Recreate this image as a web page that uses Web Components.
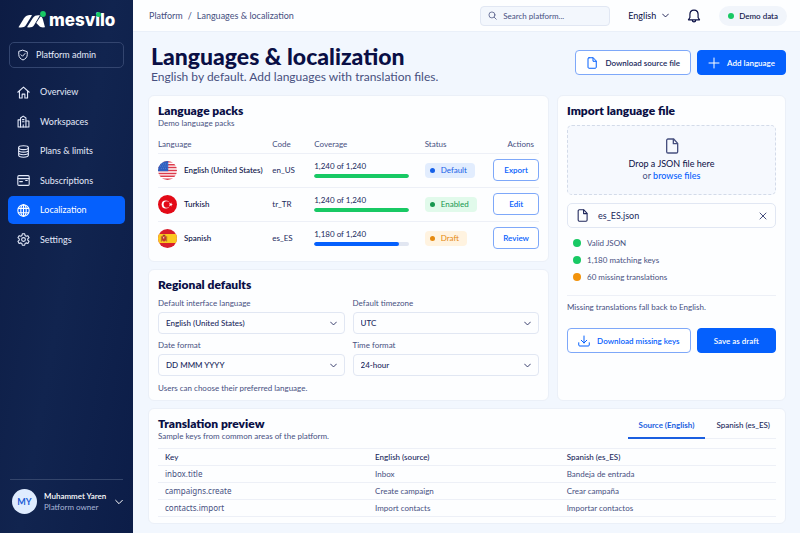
<!DOCTYPE html>
<html lang="en">
<head>
<meta charset="utf-8">
<meta name="viewport" content="width=device-width, initial-scale=1">
<title>Languages &amp; localization</title>
<style>
  :root {
    --ink: #0a0f45; --text: #20285c; --muted: #47507f; --blue: #0560fd;
    --line: #edf0f7; --edge: #e1e7f3; --green: #18c964; --orange: #f2930c;
  }
  body { margin: 0; font: 9px/12px Lato, "Noto Sans", sans-serif; color: var(--text); background: #f2f7fe; }
</style>
</head>
<body>
<admin-shell>
  <side-bar slot="side"></side-bar>
  <top-bar slot="top"></top-bar>
  <page-head></page-head>
  <card-grid>
    <ui-card heading="Language packs" note="Demo language packs"><language-table></language-table></ui-card>
    <ui-card heading="Regional defaults"><regional-form></regional-form></ui-card>
    <ui-card class="tall" heading="Import language file"><import-panel></import-panel></ui-card>
    <ui-card class="wide" heading="Translation preview" note="Sample keys from common areas of the platform.">
      <preview-tabs slot="tools"></preview-tabs>
      <preview-table></preview-table>
    </ui-card>
  </card-grid>
</admin-shell>

<script>
const define = (name, html, setup) => customElements.define(name, class extends HTMLElement {
  constructor() {
    super();
    this.attachShadow({ mode: 'open' });
  }
  connectedCallback() {
    const t = document.createElement('template');
    t.innerHTML = '<style>*{box-sizing:border-box}:host{display:block;box-sizing:border-box}</style>' +
      (typeof html === 'function' ? html(this) : html);
    this.shadowRoot.replaceChildren(t.content.cloneNode(true));
    if (setup) setup(this.shadowRoot, this);
  }
});

const ICONS = {
  shield: '<path d="M12 2.500 20.500 5.500V11c0 5.500-3.500 9-8.500 11-5-2-8.500-5.500-8.500-11V5.500z"/><path d="m8 11.500 3 3 5-5.500"/>',
  home: '<path d="M1.500 11.500 12 2l10.500 9.500"/><path d="M4.500 9.500V22H9.500v-7h5v7h5V9.500"/>',
  building: '<path d="M6.500 22V5.500L11.500 2l5 3.500V22"/><path d="M6.500 9H2v13h20V11h-5.500"/><path d="M11.500 22v-4M10 8.500h3M10 12.500h3"/>',
  stack: '<ellipse cx="12" cy="5" rx="9" ry="3.500"/><path d="M3 5v14c0 2 4 3.500 9 3.500s9-1.500 9-3.500V5M3 9.700c0 2 4 3.500 9 3.500s9-1.500 9-3.500M3 14.400c0 2 4 3.500 9 3.500s9-1.500 9-3.500"/>',
  cardpay: '<rect x="1.500" y="3" width="21" height="18" rx="2"/><path d="M1.500 8.500h21M5 14h5M16 12h3"/>',
  globe: '<circle cx="12" cy="12" r="10.500"/><ellipse cx="12" cy="12" rx="5" ry="10.500"/><path d="M2.500 8h19M2.500 16h19M12 1.500v21"/>',
  gear: '<circle cx="12" cy="12" r="3.500"/><path d="M9.800 1.500h4.400l.7 3.200 2 1.200 3.200-1 2.200 3.800-2.500 2.200v2.300l2.500 2.200-2.200 3.800-3.200-1-2 1.200-.7 3.200H9.800l-.7-3.200-2-1.200-3.200 1-2.200-3.800 2.500-2.200v-2.300L1.700 8.700l2.200-3.800 3.200 1 2-1.200z"/>',
  down: '<path d="m2 7 10 10L22 7"/>',
  search: '<circle cx="10.500" cy="10.500" r="8"/><path d="m16.500 16.500 5.500 5.500"/>',
  bell: '<path d="M12 2c-4.200 0-7 3.200-7 7v5.500L2.500 18.500h19L19 14.500V9c0-3.800-2.800-7-7-7zM9 19c.3 4 5.700 4 6 0"/>',
  file: '<path d="M6 1.500h8.500L20.500 8v12.500a2 2 0 0 1-2 2H6a2 2 0 0 1-2-2v-17a2 2 0 0 1 2-2z"/><path d="M14 2v6.500h6"/>',
  plus: '<path d="M12 2v20M2 12h20"/>',
  close: '<path d="m3 3 18 18M21 3 3 21"/>',
  download: '<path d="M12 2v14M6.500 10.500 12 16l5.500-5.500M1.500 15.500V20a2 2 0 0 0 2 2h17a2 2 0 0 0 2-2v-4.500"/>',
};
define('ui-icon', el => `
  <style>:host{display:inline-flex;flex:none;width:${el.getAttribute('size') || 12}px;height:${el.getAttribute('size') || 12}px}
  svg{width:100%;height:100%;fill:none;stroke:currentColor;stroke-width:${el.getAttribute('weight') || 2};stroke-linecap:round;stroke-linejoin:round}</style>
  <svg viewBox="0 0 24 24" aria-hidden="true">${ICONS[el.getAttribute('name')]}</svg>`);

const FLAGS = {
  us: '<path fill="#fff" d="M0 0h26v26H0z"/><path stroke="#dd3a4b" stroke-width="2" d="M0 1h26M0 5h26M0 9h26M0 13h26M0 17h26M0 21h26M0 25h26"/><path fill="#2f5fc0" d="M0 0h14v14H0z"/><path stroke="#7f9fe0" stroke-width="1" stroke-dasharray="1 2" d="M4 4h10M3 7h11M4 10h10"/>',
  tr: '<path fill="#e30a17" d="M0 0h26v26H0z"/><circle cx="10.500" cy="13" r="5.500" fill="#fff"/><circle cx="12" cy="13" r="4.300" fill="#e30a17"/><path fill="#fff" d="m20.500 13-2 .8-.1 2.100-1.300-1.700-2 .5 1.100-1.700-1.100-1.800 2 .6 1.300-1.700.1 2.200z"/>',
  es: '<path fill="#d81e2c" d="M0 0h26v26H0z"/><path fill="#fbc81f" d="M0 7h26v12H0z"/><path fill="#c0392f" d="M5.500 10h5.500v4.500a2.700 2.700 0 0 1-5.500 0z"/><path fill="#8c4b2c" d="M4 10h1v7H4zM11.500 10h1v7h-1zM6.500 8h3.500v1.500H6.500z"/><path fill="#f3d7c0" d="M7 11h1.500v2H7z"/>',
};
define('flag-disc', el => `
  <style>:host{display:inline-flex;flex:none;width:19px;height:19px;border-radius:50%;overflow:hidden}svg{width:100%;height:100%}</style>
  <svg viewBox="0 0 26 26" aria-hidden="true">${FLAGS[el.getAttribute('country')]}</svg>`);

define('ui-button', el => `
  <style>
    :host{display:block}
    button{width:100%;height:25px;display:flex;align-items:center;justify-content:center;gap:7px;padding:0 9px;
      font:600 8px/12px Lato,sans-serif;white-space:nowrap;border-radius:4px;border:1px solid #7ea8f9;background:#fff;color:var(--blue)}
    :host([kind=primary]) button{background:var(--blue);border-color:var(--blue);color:#fff}
    :host([kind=dark]) button{color:var(--text)} :host([kind=dark]) ui-icon{color:var(--blue)}
    :host([size=large]) button{padding:0 10px}
    :host([kind=small]) button{height:22px;padding:0}
  </style>
  <button type="button">${el.hasAttribute('icon') ? `<ui-icon name="${el.getAttribute('icon')}" size="12"></ui-icon>` : ''}<slot></slot></button>`);

define('admin-shell', `
  <style>
    :host{display:grid;grid-template-columns:133px minmax(0,1fr);min-height:100vh}
    .main{display:flex;flex-direction:column;min-width:0}
    main{padding:11px 14px 8px 15px}
  </style>
  <slot name="side"></slot>
  <div class="main"><slot name="top"></slot><main><slot></slot></main></div>`);

define('brand-logo', `
  <style>
    :host{display:flex;align-items:center;gap:3px;color:#fff;font:800 17px/20px Inter,sans-serif}
    svg{width:28px;height:18px;flex:none}
    .i{position:relative}
    .i::after{content:"";position:absolute;left:50%;top:2px;width:5px;height:5px;margin-left:-2px;border-radius:50%;background:var(--green)}
  </style>
  <svg viewBox="0 0 28 18" aria-hidden="true">
    <path fill="#fff" d="M.500 16.300 6 7.300C8 4.100 11 3.800 14 4.300L8 14C6.500 16.400 4 16.800.500 16.300z"/>
    <path fill="#fff" d="M9 16.300 15 6.800c1.500-2.300 3.800-2.900 7-2.500l-6 9.900c-1 1.800-3.500 2.500-7 2.100z"/>
    <path fill="#fff" d="m18.200 12 4.300-6.500c1.200.3 1.800 1 2.200 2.200l2.300 8.600c-2.500.4-5 .1-6-1.500z"/>
    <circle cx="25" cy="3" r="2.900" fill="#18c964"/>
  </svg>
  <span>mesv<span class="i">i</span>lo</span>`);

define('nav-item', el => `
  <style>
    a{display:flex;align-items:center;gap:10px;height:28px;padding:0 9px;border-radius:5px;color:#e4eafa;text-decoration:none}
    :host([active]) a{background:var(--blue);color:#fff}
  </style>
  <a href="#"><ui-icon name="${el.getAttribute('icon')}" size="13" weight="2"></ui-icon><slot></slot></a>`);

define('side-bar', `
  <style>
    :host{display:flex;flex-direction:column;padding:10px 8px 0;color:#fff;background:linear-gradient(100deg,#0d1c44,#11244f 50%,#0c1d48)}
    brand-logo{padding-left:10px}
    .role{display:flex;align-items:center;gap:7px;height:26px;margin-top:12px;margin-inline:1px;padding:0 7px;border:1px solid #33456f;border-radius:5px;color:#e4eafa}
    nav{display:flex;flex-direction:column;justify-content:space-between;min-height:176px;margin-top:10px}
    footer{margin-top:auto;border-top:1px solid #34456b;margin-inline:2px}
    button{display:flex;align-items:center;gap:7px;width:100%;height:53px;padding:0 0 10px 2px;border:0;background:none;color:#fff;font:inherit;text-align:left}
    .avatar{display:grid;place-items:center;flex:none;width:25px;height:25px;border-radius:50%;background:#dfecff;color:#1c5cd6;font-weight:700}
    .who{flex:1;font:8px/11px Lato,sans-serif;white-space:nowrap}
    b{display:block;font-weight:600} .who span{color:#a9b6d8}
  </style>
  <brand-logo></brand-logo>
  <div class="role"><ui-icon name="shield" size="12"></ui-icon>Platform admin</div>
  <nav aria-label="Platform">
    <nav-item icon="home">Overview</nav-item>
    <nav-item icon="building">Workspaces</nav-item>
    <nav-item icon="stack">Plans &amp; limits</nav-item>
    <nav-item icon="cardpay">Subscriptions</nav-item>
    <nav-item icon="globe" active>Localization</nav-item>
    <nav-item icon="gear">Settings</nav-item>
  </nav>
  <footer><button type="button"><span class="avatar">MY</span><span class="who"><b>Muhammet Yaren</b><span>Platform owner</span></span><ui-icon name="down" size="8" weight="3"></ui-icon></button></footer>`);

define('top-bar', `
  <style>
    :host{display:flex;align-items:center;height:32px;padding:0 13px 0 16px;background:#fdfeff;border-bottom:1px solid #eaf0f9}
    nav{flex:1;display:flex;gap:5px;color:var(--muted);white-space:nowrap} nav a{color:inherit;text-decoration:none}
    .search{display:flex;align-items:center;gap:6px;width:130px;height:20px;padding:0 7px;border:1px solid var(--edge);border-radius:4px;background:#f3f7fd;color:var(--muted)}
    input{flex:1;min-width:0;padding:0;border:0;background:none;font:8px/12px Lato,sans-serif;color:inherit}
    input::placeholder{color:inherit;opacity:1}
    button{display:flex;align-items:center;gap:6px;padding:0;border:0;background:none;font:inherit;color:var(--ink)}
    .lang{margin-left:18px} .bell{margin-left:18px}
    .pill{display:flex;align-items:center;gap:5px;height:20px;margin-left:18px;padding:0 9px;border-radius:10px;background:#f1f5fb;color:var(--ink);font-size:8px;font-weight:500}
    .pill::before{content:"";width:6px;height:6px;border-radius:50%;background:var(--green)}
  </style>
  <nav aria-label="Breadcrumb"><a href="#">Platform</a><span>/</span><a href="#">Languages &amp; localization</a></nav>
  <label class="search"><ui-icon name="search" size="9"></ui-icon><input type="search" placeholder="Search platform..." aria-label="Search platform"></label>
  <button class="lang" type="button">English<ui-icon name="down" size="7" weight="3"></ui-icon></button>
  <button class="bell" type="button" aria-label="Notifications"><ui-icon name="bell" size="14"></ui-icon></button>
  <span class="pill">Demo data</span>`);

define('page-head', `
  <style>
    :host{display:flex;align-items:flex-start;gap:6px;height:45px;margin:0 0 7px 3px}
    .t{flex:1} h1{margin:0;font:900 23px/26px Lato,sans-serif;color:var(--ink);white-space:nowrap}
    p{margin:0;font-size:12px;line-height:16px;color:var(--muted);white-space:nowrap}
    ui-button{margin-top:7px}
  </style>
  <div class="t"><h1>Languages &amp; localization</h1><p>English by default. Add languages with translation files.</p></div>
  <ui-button kind="dark" size="large" icon="file">Download source file</ui-button>
  <ui-button kind="primary" size="large" icon="plus">Add language</ui-button>`);

define('card-grid', `
  <style>
    :host{display:grid;grid-template-columns:minmax(0,401fr) minmax(0,229fr);gap:7px 8px}
    ::slotted(.tall){grid-column:2;grid-row:1/span 2} ::slotted(.wide){grid-column:1/-1}
  </style><slot></slot>`);

define('ui-card', el => `
  <style>
    :host{padding:8px 9px 6px;background:#fdfeff;border:1px solid #ebf0f8;border-radius:6px}
    header{display:flex;justify-content:space-between}
    h2{margin:0;font:800 12px/14px Lato,sans-serif;color:var(--ink)}
    p{margin:0;font-size:8px;line-height:11px;color:var(--muted)}
  </style>
  <header><div><h2>${el.getAttribute('heading')}</h2>${el.hasAttribute('note') ? `<p>${el.getAttribute('note')}</p>` : ''}</div><slot name="tools"></slot></header>
  <slot></slot>`);

define('status-pill', `
  <style>
    :host{display:inline-flex;align-items:center;gap:6px;height:15px;padding:0 8px 0 5px;border-radius:4px;font-size:8px;color:#1560e8;background:#e2edfe}
    :host::before{content:"";width:5px;height:5px;border-radius:50%;background:currentColor}
    :host([tone=ok]){color:#16974f;background:#e1faeb} :host([tone=warn]){color:#e58a10;background:#fff3e0}
  </style><slot></slot>`);

define('coverage-bar', el => {
  const done = +el.getAttribute('done'), total = +el.getAttribute('total');
  return `
  <style>
    :host{display:flex;flex-direction:column;gap:3px;padding-bottom:1px;font-size:8px;line-height:10px}
    .bar{height:4px;border-radius:2px;background:#e1e6f1;overflow:hidden}
    .bar i{display:block;height:100%;border-radius:2px;width:${el.getAttribute('fill')}%;background:${done < total ? 'var(--blue)' : 'var(--green)'}}
  </style>
  <span>${done.toLocaleString('en-US')} of ${total.toLocaleString('en-US')}</span>
  <div class="bar" role="progressbar" aria-label="Coverage" aria-valuenow="${done}" aria-valuemax="${total}"><i></i></div>`;
});

const PACKS = [
  ['us', 'English (United States)', 'en_US', 1240, 100, '', 'Default', 'Export'],
  ['tr', 'Turkish', 'tr_TR', 1240, 100, 'ok', 'Enabled', 'Edit'],
  ['es', 'Spanish', 'es_ES', 1180, 89, 'warn', 'Draft', 'Review'],
];
define('language-table', `
  <style>
    table{width:100%;border-collapse:collapse;table-layout:fixed;font-size:8px;margin-top:6px}
    th{height:18px;padding:0;text-align:left;font-weight:400;color:var(--muted)}
    td{height:34px;padding:0;border-top:1px solid var(--line)}
    th:nth-child(1){width:30%} th:nth-child(2){width:11%} th:nth-child(3){width:29%} th:nth-child(4){width:18%}
    th:last-child{text-align:right;padding-right:5px}
    .name{display:flex;align-items:center;gap:7px;font-weight:500;color:var(--ink);white-space:nowrap}
    coverage-bar{width:86%}
  </style>
  <table>
    <thead><tr><th>Language</th><th>Code</th><th>Coverage</th><th>Status</th><th>Actions</th></tr></thead>
    <tbody>${PACKS.map(p => `<tr><td><span class="name"><flag-disc country="${p[0]}"></flag-disc>${p[1]}</span></td><td>${p[2]}</td>
      <td><coverage-bar done="${p[3]}" total="1240" fill="${p[4]}"></coverage-bar></td>
      <td><status-pill tone="${p[5]}">${p[6]}</status-pill></td><td><ui-button kind="small">${p[7]}</ui-button></td></tr>`).join('')}</tbody>
  </table>`);

define('select-field', el => `
  <style>
    label{display:block;font-size:8px;line-height:11px;color:var(--muted)}
    .box{display:grid;align-items:center;margin-top:3px}
    .box>*{grid-area:1/1}
    select{appearance:none;width:100%;height:22px;padding:0 20px 0 7px;border:1px solid var(--edge);border-radius:4px;background:#fdfeff;font:500 8px/12px Lato,sans-serif;color:var(--text)}
    ui-icon{justify-self:end;margin-right:8px;pointer-events:none}
  </style>
  <label for="s">${el.getAttribute('label')}</label>
  <div class="box"><select id="s"><option>${el.getAttribute('value')}</option></select><ui-icon name="down" size="7" weight="3"></ui-icon></div>`);

define('regional-form', `
  <style>
    .grid{display:grid;grid-template-columns:1fr 1fr;gap:6px 8px;margin-top:6px}
    p{margin:6px 0 0;font-size:8px;line-height:12px;color:var(--muted)}
  </style>
  <div class="grid">
    <select-field label="Default interface language" value="English (United States)"></select-field>
    <select-field label="Default timezone" value="UTC"></select-field>
    <select-field label="Date format" value="DD MMM YYYY"></select-field>
    <select-field label="Time format" value="24-hour"></select-field>
  </div>
  <p>Users can choose their preferred language.</p>`);

define('import-panel', `
  <style>
    .drop{display:flex;flex-direction:column;align-items:center;justify-content:center;height:70px;margin-top:7px;border:1px dashed #d3dbe9;border-radius:5px;background:#f6f9fe;color:var(--ink)}
    .drop ui-icon{color:var(--muted);margin-bottom:4px}
    .drop span{color:var(--muted)} a{color:var(--blue);font-weight:500;text-decoration:none}
    .file{display:flex;align-items:center;gap:9px;height:25px;margin-top:8px;padding:0 8px;border:1px solid var(--edge);border-radius:5px}
    .file span{flex:1} .file button{display:flex;padding:0;border:0;background:none;color:var(--muted)}
    ul{list-style:none;display:grid;gap:5px;margin:9px 0 0;padding:0 0 12px 6px;border-bottom:1px solid var(--line);font-size:8px;color:var(--muted)}
    li{display:flex;align-items:center;gap:6px} li::before{content:"";width:8px;height:8px;border-radius:50%;background:var(--green)}
    li.warn::before{background:var(--orange)}
    p{margin:5px 0 15px;font-size:8px;color:var(--muted)}
    .row{display:grid;grid-template-columns:123fr 79fr;gap:6px}
  </style>
  <div class="drop"><ui-icon name="file" size="16"></ui-icon>Drop a JSON file here<span>or <a href="#">browse files</a></span></div>
  <div class="file"><ui-icon name="file" size="13"></ui-icon><span>es_ES.json</span><button type="button" aria-label="Remove file"><ui-icon name="close" size="8" weight="3"></ui-icon></button></div>
  <ul><li>Valid JSON</li><li>1,180 matching keys</li><li class="warn">60 missing translations</li></ul>
  <p>Missing translations fall back to English.</p>
  <div class="row"><ui-button icon="download">Download missing keys</ui-button><ui-button kind="primary">Save as draft</ui-button></div>`);

define('preview-tabs', `
  <style>
    :host{display:flex;align-self:start}
    button{height:22px;padding:0 11px 5px;border:0;border-bottom:1px solid var(--line);background:none;font:500 8px/12px Lato,sans-serif;color:var(--text);white-space:nowrap}
    button[aria-selected=true]{padding-bottom:4px;border-bottom:2px solid #1b5fe0;color:#1b5fe0;font-weight:700}
    button:last-child{padding-right:6px}
    div{display:flex}
  </style>
  <div role="tablist"><button role="tab" aria-selected="true">Source (English)</button><button role="tab" aria-selected="false">Spanish (es_ES)</button></div>`);

define('preview-table', `
  <style>
    table{width:100%;border-collapse:collapse;table-layout:fixed;margin-top:6px;font-size:8px;line-height:12px;border-bottom:1px solid var(--line)}
    th,td{height:17px;padding:0 0 0 7px;text-align:left;font-weight:400;border-top:1px solid var(--line);color:var(--muted)}
    th{color:var(--text);font-weight:500} th:nth-child(1){width:34%} th:nth-child(2){width:31%}
    td:first-child{font-family:"Noto Sans",sans-serif}
  </style>
  <table>
    <thead><tr><th>Key</th><th>English (source)</th><th>Spanish (es_ES)</th></tr></thead>
    <tbody>
      <tr><td>inbox.title</td><td>Inbox</td><td>Bandeja de entrada</td></tr>
      <tr><td>campaigns.create</td><td>Create campaign</td><td>Crear campaña</td></tr>
      <tr><td>contacts.import</td><td>Import contacts</td><td>Importar contactos</td></tr>
    </tbody>
  </table>`);
</script>
</body>
</html>
